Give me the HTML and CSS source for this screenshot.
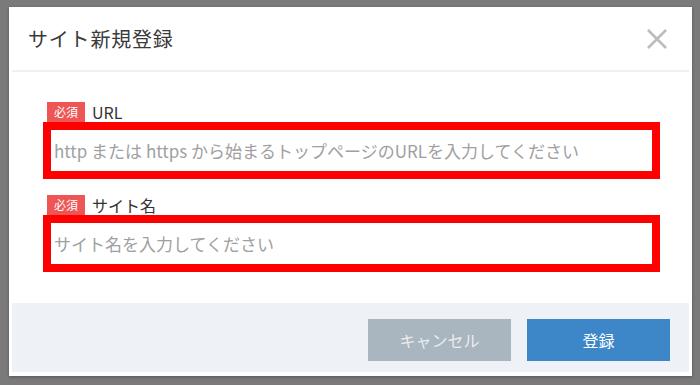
FILE: index.html
```html
<!DOCTYPE html>
<html lang="ja">
<head>
  <meta charset="UTF-8" />
  <title>サイト新規登録</title>
  <meta name="viewport" content="width=device-width, initial-scale=1" />
  <link rel="stylesheet" href="styles.css">
</head>
<body>

  <div class="modal">
    <div class="modal-header">
      <h2>サイト新規登録</h2>
      <button class="close" aria-label="閉じる">
        <svg width="22" height="22" viewBox="0 0 22 22">
          <path d="M2 2 L20 20 M20 2 L2 20" stroke="#bcbcbc" stroke-width="2.6" fill="none" />
        </svg>
      </button>
    </div>

    <div class="modal-body">
      <div class="field">
        <label><span class="req">必須</span>URL</label>
        <input type="text" placeholder="http または https から始まるトップページのURLを入力してください" />
      </div>
      <div class="field">
        <label><span class="req">必須</span>サイト名</label>
        <input type="text" placeholder="サイト名を入力してください" />
      </div>
    </div>

    <div class="modal-footer">
      <button class="btn cancel">キャンセル</button>
      <button class="btn primary">登録</button>
    </div>
  </div>

</body>
</html>
```

FILE: styles.css
```css
body {
  margin: 0;
  font-family: "Noto Sans CJK JP", "Noto Sans", sans-serif;
  background: #7a7a7a;
  height: 385px;
  overflow: hidden;
}
.modal {
  margin: 7px 0 0 9px;
  width: 683px;
  height: 369px;
  background: #fff;
  display: flex;
  flex-direction: column;
  box-shadow: 0 1px 3px rgba(0, 0, 0, 0.3);
}
.modal-header {
  height: 63px;
  border-bottom: 2px solid #f0f0f0;
  display: flex;
  align-items: center;
  justify-content: space-between;
  padding: 0 21px 0 16px;
  margin: 0 3px;
}
.modal-header h2 {
  margin: 0;
  font-size: 20px;
  font-weight: normal;
  color: #3a3a3a;
  letter-spacing: 0.8px;
}
.close {
  border: none;
  background: none;
  padding: 0;
  width: 22px;
  height: 22px;
  cursor: pointer;
}
.modal-body {
  flex: 1;
  padding: 29px 32px 0 34px;
}
.field label {
  display: flex;
  align-items: center;
  height: 21px;
  font-size: 16px;
  color: #333;
}
.req {
  background: #ee5656;
  color: #fff;
  font-size: 12px;
  width: 38px;
  height: 20px;
  line-height: 20px;
  text-align: center;
  margin-left: 4px;
  margin-right: 7px;
}
.field input {
  display: block;
  box-sizing: border-box;
  width: 617px;
  height: 57px;
  border: 8px solid #ff0000;
  padding: 0 0 0 3px;
  font-family: inherit;
  font-size: 17px;
  color: #333;
  outline: none;
}
.field input::placeholder {
  color: #a0a0a0;
}
.field + .field {
  margin-top: 15px;
}
.modal-footer {
  height: 69px;
  box-sizing: border-box;
  background: #eef1f6;
  display: flex;
  justify-content: flex-end;
  align-items: flex-start;
  gap: 16px;
  padding: 16px 19px 0;
  margin: 0 3px 4px;
}
.btn {
  width: 143px;
  height: 42px;
  border: none;
  font-family: inherit;
  font-size: 16px;
  cursor: pointer;
}
.cancel {
  background: #a9b5bf;
  color: #e9edf0;
}
.primary {
  background: #3d87c9;
  color: #fff;
}
```
